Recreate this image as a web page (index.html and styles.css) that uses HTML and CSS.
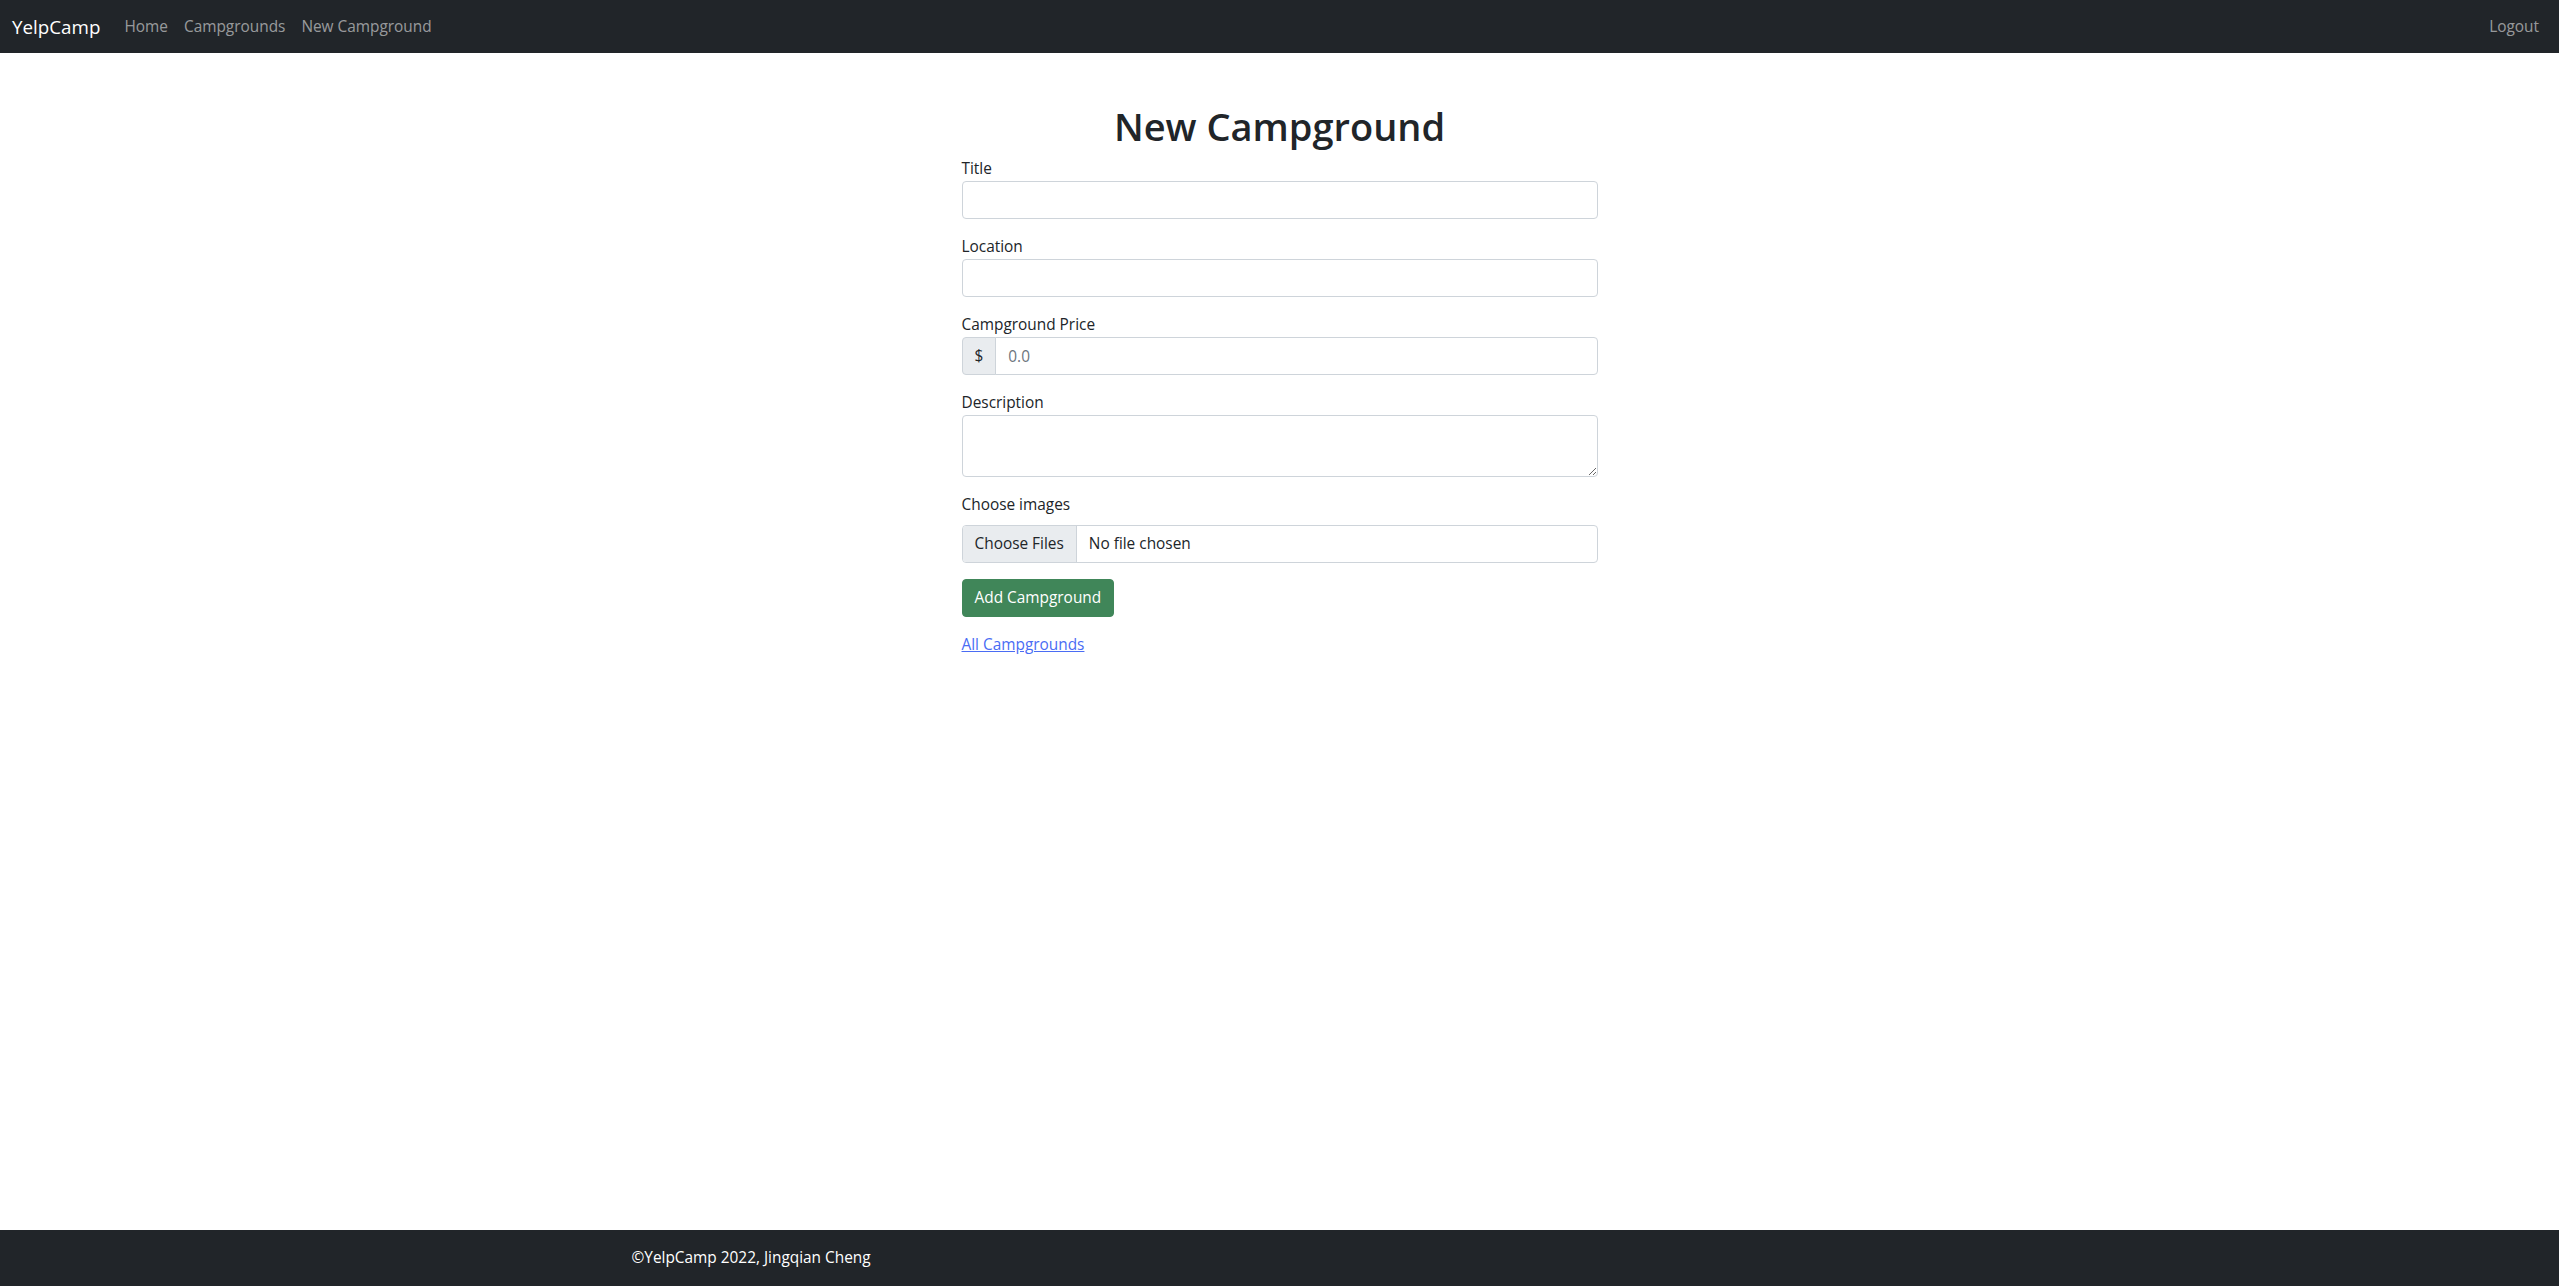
FILE: index.html
```html
<!DOCTYPE html>
<html lang="en">
<head>
<meta charset="utf-8">
<title>New Campground</title>
<link rel="stylesheet" href="styles.css">
</head>
<body>
<nav class="navbar">
  <div class="navbar-inner">
    <a class="brand" href="#">YelpCamp</a>
    <div class="nav-links">
      <a class="nav-link" href="#">Home</a>
      <a class="nav-link" href="#">Campgrounds</a>
      <a class="nav-link" href="#">New Campground</a>
    </div>
    <div class="nav-right">
      <a class="nav-link" href="#">Logout</a>
    </div>
  </div>
</nav>
<main class="container main">
  <div class="row">
    <h1 class="page-title">New Campground</h1>
    <div class="col">
      <form class="form">
        <div class="field">
          <label class="label" for="title">Title</label>
          <input class="control" type="text" id="title">
        </div>
        <div class="field">
          <label class="label" for="location">Location</label>
          <input class="control" type="text" id="location">
        </div>
        <div class="field">
          <label class="label" for="price">Campground Price</label>
          <div class="input-group">
            <span class="addon">$</span>
            <input class="control group-control" type="text" id="price" placeholder="0.0">
          </div>
        </div>
        <div class="field">
          <label class="label" for="description">Description</label>
          <textarea class="control textarea" id="description"></textarea>
        </div>
        <div class="field">
          <label class="label label-block" for="image">Choose images</label>
          <input class="control file" type="file" id="image" multiple>
        </div>
        <div class="field">
          <button class="btn-success" type="button">Add Campground</button>
        </div>
      </form>
      <a class="back-link" href="#">All Campgrounds</a>
    </div>
  </div>
</main>
<footer class="footer">
  <div class="container">
    <span class="footer-text">©YelpCamp 2022, Jingqian Cheng</span>
  </div>
</footer>
</body>
</html>
```
FILE: styles.css
```css
* { box-sizing: border-box; }
html, body { height: 100%; }
body {
  margin: 0;
  display: flex;
  flex-direction: column;
  min-height: 100vh;
  font-family: "Open Sans", "Noto Sans", sans-serif;
  font-size: 15.4px;
  line-height: 24px;
  color: #212529;
  background: #fff;
}
a { text-decoration: none; }

.navbar {
  background: #212529;
  height: 53px;
  flex: 0 0 auto;
}
.navbar-inner {
  height: 100%;
  padding: 0 12px;
  display: flex;
  align-items: center;
}
.brand {
  color: #fff;
  font-size: 18.8px;
  line-height: 30px;
  margin-right: 16px;
}
.nav-links { display: flex; }
.nav-right { margin-left: auto; display: flex; }
.nav-link {
  color: rgba(255,255,255,.55);
  padding: 8px 8px;
  font-size: 15.4px;
  line-height: 24px;
}

.container {
  width: 100%;
  max-width: 1320px;
  margin: 0 auto;
  padding: 0 12px;
}
.main { margin-top: 48px; }
.row {
  display: flex;
  flex-wrap: wrap;
  margin: 0 -12px;
}
.page-title {
  width: 100%;
  padding: 1px 12px 0;
  margin: 0 0 8px;
  height: 48px;
  text-align: center;
  font-size: 38px;
  line-height: 48px;
  font-weight: 600;
}
.col {
  width: 50%;
  margin-left: 25%;
  padding: 0 12px;
}
.form { margin: 0; }
.field { margin-bottom: 16px; }
.label { display: inline; }
.label-block { display: inline-block; margin-bottom: 8px; }
.control {
  display: block;
  width: 100%;
  height: 38px;
  padding: 6px 12px;
  font-family: inherit;
  font-size: 15.4px;
  line-height: 24px;
  color: #212529;
  background: #fff;
  border: 1px solid #ced4da;
  border-radius: 4px;
  outline: none;
}
.control::placeholder { color: #6c757d; }
.textarea {
  height: 62px;
  resize: vertical;
}
.input-group {
  display: flex;
  align-items: stretch;
  width: 100%;
}
.addon {
  display: flex;
  align-items: center;
  padding: 6px 12px;
  background: #e9ecef;
  border: 1px solid #ced4da;
  border-radius: 4px 0 0 4px;
  line-height: 24px;
}
.group-control {
  flex: 1 1 auto;
  width: 1%;
  margin-left: -1px;
  border-radius: 0 4px 4px 0;
}
.file {
  padding: 6px 12px;
  overflow: hidden;
}
.file::file-selector-button {
  font-family: inherit;
  font-size: 15.4px;
  line-height: 24px;
  color: #212529;
  background: #e9ecef;
  border: 0;
  border-right: 1px solid #ced4da;
  border-radius: 0;
  padding: 6px 12px;
  margin: -6px 12px -6px -12px;
  height: 36px;
}
.btn-success {
  font-family: inherit;
  font-size: 15.4px;
  line-height: 24px;
  padding: 6px 12px;
  color: #fff;
  background: #408659;
  border: 1px solid #408659;
  border-radius: 4px;
  cursor: pointer;
}
.back-link {
  color: #4a6cf4;
  text-decoration: underline;
}

.footer {
  margin-top: auto;
  background: #212529;
  padding: 16px 0;
  flex: 0 0 auto;
}
.footer-text { color: #fff; }
```
